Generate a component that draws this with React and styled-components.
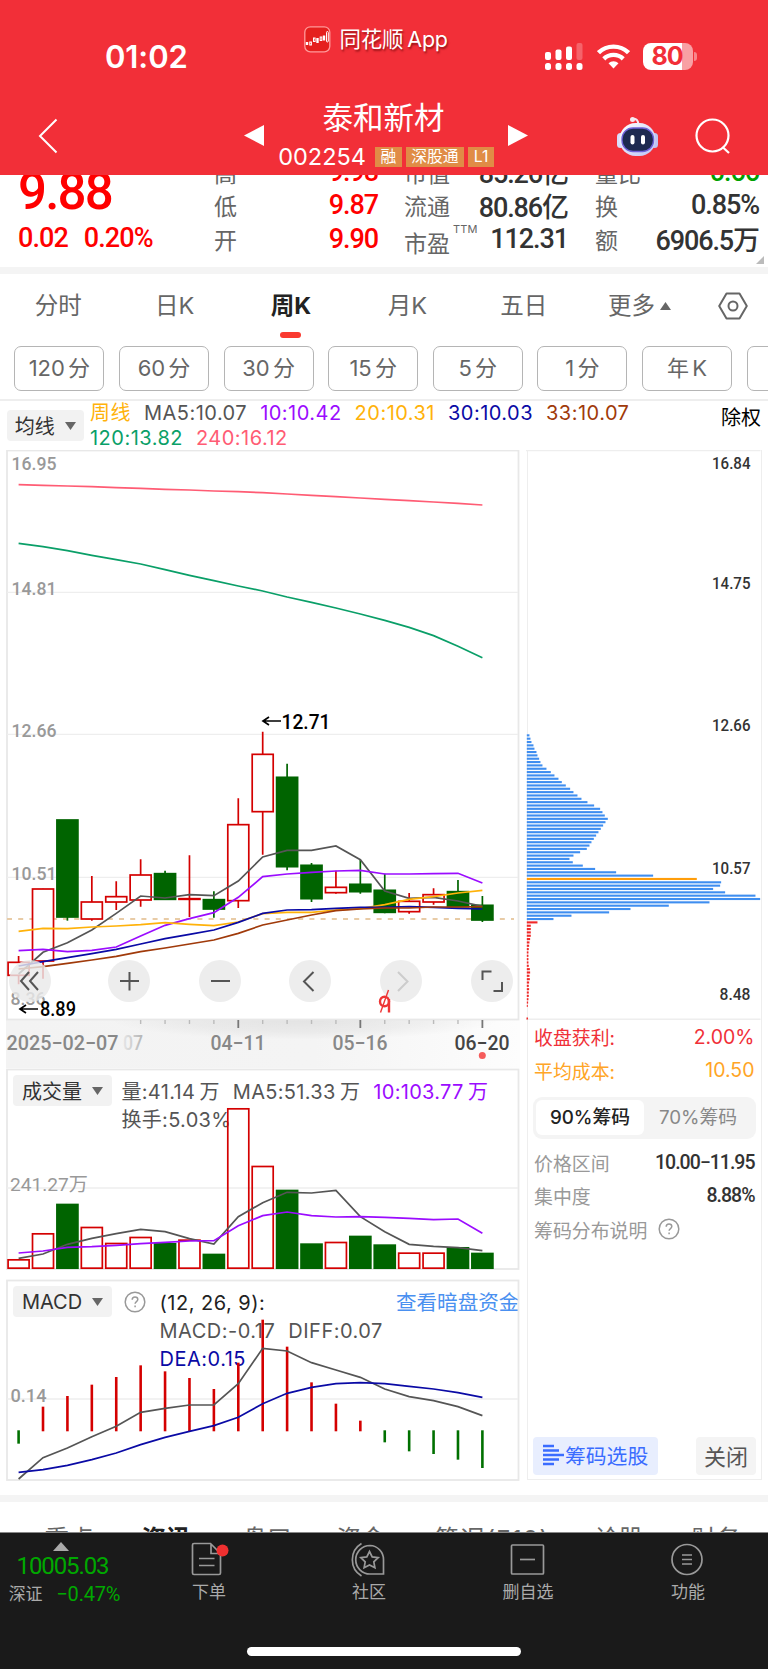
import React from "react";
import styled, { createGlobalStyle, css } from "styled-components";

const CJK = `"Noto Sans CJK SC", sans-serif`;
const TEXT = `Inter, ${CJK}`;
const DIN = `Roboto, ${CJK}`;

const UP = "#d40000";
const DOWN = "#006400";

const GlobalStyle = createGlobalStyle`
    * { box-sizing: border-box; }
    body { margin: 0; background: #fff; overflow: hidden; }
    svg { display: block; flex: none; }
    svg text { font-family: ${DIN}; }
`;

const Page = styled.div`
    width: 768px;
    height: 1669px;
    overflow: hidden;
    background: #fff;
    color: #333;
    font-family: ${TEXT};
    white-space: nowrap;
`;

/* ---------- header ---------- */

const Header = styled.header`
    height: 175px;
    background: #f22f38;
    color: #fff;
`;

const StatusBar = styled.div`
    height: 96px;
    display: grid;
    grid-template-columns: 304px 241px 1fr;
`;

const Clock = styled.div`
    padding: 38px 0 0 105px;
    font-size: 31px;
    line-height: 38px;
    font-weight: 600;
    letter-spacing: -0.1px;
`;

const Brand = styled.div`
    display: flex;
    align-items: center;
    gap: 8.5px;
    height: 26px;
    margin-top: 26px;
    font-size: 21.5px;
    line-height: 22px;
    letter-spacing: -0.2px;
    word-spacing: -2px;
    text-shadow: 1px 2px 2px rgba(90, 0, 0, 0.6);
    span { padding-bottom: 1px; }
`;

const StatusIcons = styled.div`
    display: flex;
    align-items: center;
    height: 28px;
    margin-top: 42px;
    gap: 13.5px;
`;

const Battery = styled.div`
    display: flex;
    align-items: center;
    gap: 1px;
    b {
        width: 50px;
        height: 27px;
        border-radius: 8px;
        background: linear-gradient(90deg, #fff 39px, #f8a0a4 39px);
        color: #f22f38;
        font-size: 25px;
        line-height: 27px;
        font-weight: 700;
        letter-spacing: -1px;
        padding-left: 8.5px;
    }
    i {
        width: 3px;
        height: 9px;
        border-radius: 0 4px 4px 0;
        background: #f8858a;
    }
`;

const TitleBar = styled.div`
    height: 79px;
    display: grid;
    grid-template-columns: 244px 20px 244px 20px 1fr;
    > svg { margin-top: 29px; }
`;

const BackCell = styled.div`
    padding: 22px 0 0 38px;
`;

const StockTitle = styled.div`
    display: flex;
    flex-direction: column;
    align-items: center;
    h1 {
        margin: 1px 0 0 -5px;
        font-size: 30.5px;
        line-height: 42px;
        font-weight: 400;
    }
`;

const CodeRow = styled.div`
    display: flex;
    align-items: center;
    gap: 4px;
    height: 32px;
    margin-top: 2px;
    font-size: 23.5px;
    span { margin: 0 5px 0 0; line-height: 26px; }
`;

const Badge = styled.em`
    height: 20px;
    padding: 0 5.5px;
    background: #e08c46;
    font: 400 15.8px/20px ${TEXT};
`;

const HeaderActions = styled.div`
    display: flex;
    align-items: flex-start;
    padding: 20px 0 0 88px;
    gap: 35.5px;
`;

/* ---------- quote ---------- */

const Quote = styled.section`
    height: 92px;
    overflow: hidden;
    display: grid;
    grid-template-columns: 214px 164px 26px 164px 27px 164px;
    position: relative;
`;

const LastPrice = styled.div`
    margin-top: -28px;
    padding-left: 18px;
    color: #f00;
    font-family: ${DIN};
    font-weight: 500;
    div { font-size: 51px; line-height: 60px; height: 76px; letter-spacing: -1.8px; padding-top: 15px; }
    p { margin: 0; font-size: 27px; line-height: 30px; letter-spacing: -0.9px; word-spacing: 10px; }
`;

const QuoteCol = styled.dl`
    margin: -20px 0 0;
    grid-column: ${props => props.$col};
`;

const QuoteRow = styled.div`
    height: 33.5px;
    display: flex;
    justify-content: space-between;
    align-items: center;
    dt { font-size: 23px; color: #666; position: relative; top: ${props => (props.$sup ? 3 : 0)}px; }
    dt sup { font-size: 11px; position: absolute; left: 49px; top: -2px; line-height: 12px; letter-spacing: .2px; }
    dd {
        margin: 0;
        font-family: ${DIN};
        font-size: 27px;
        font-weight: 500;
        letter-spacing: -1.1px;
        color: ${props => props.$color || "#333"};
    }
`;

const Corner = styled.i`
    position: absolute;
    right: 4px;
    bottom: 3px;
    border: 4.5px solid;
    border-color: transparent #bbb #bbb transparent;
`;

const Divider = styled.div`
    height: 7px;
    background: #f4f4f4;
`;

/* ---------- periods ---------- */

const PeriodTabs = styled.nav`
    display: flex;
    align-items: center;
    height: 63px;
    font-size: 23.5px;
    color: #666;
`;

const PeriodTab = styled.div`
    width: 116.4px;
    height: 63px;
    line-height: 63px;
    text-align: center;
    ${props => props.$active && css`
        font-weight: 700;
        color: #222;
        &::after {
            content: "";
            display: block;
            width: 21px;
            height: 6px;
            margin: -5px auto 0;
            border-radius: 3px;
            background: #fa3a30;
        }
    `}
`;

const More = styled.div`
    display: flex;
    align-items: center;
    gap: 5px;
    padding-left: 26px;
    width: 136px;
    line-height: 62px;
    height: 63px;
`;

const Chips = styled.div`
    display: flex;
    gap: 14.6px;
    padding: 9px 0 9px 14.4px;
    height: 64px;
    border-bottom: 2px solid #eee;
    overflow: hidden;
`;

const Chip = styled.div`
    flex: none;
    width: 90px;
    height: 45px;
    border: 1.5px solid #b5b5b5;
    border-radius: 7px;
    font-size: 22px;
    line-height: 43px;
    text-align: center;
    word-spacing: -3px;
    color: #666;
`;

/* ---------- averages legend ---------- */

const Legend = styled.div`
    height: 49px;
    display: flex;
    padding: 0 7px 0 6.5px;
`;

const Dropdown = styled.div`
    flex: none;
    display: flex;
    align-items: center;
    justify-content: center;
    gap: 10px;
    width: ${props => props.$w}px;
    height: 31px;
    margin-top: ${props => props.$mt || 0}px;
    border-radius: 4px;
    background: #f2f2f2;
    font-size: 20px;
    color: #333;
`;

const LegendText = styled.div`
    flex: 1;
    margin-left: 6px;
    font-size: 20px;
    line-height: 24.5px;
    letter-spacing: 0.48px;
`;

const Tint = styled.span`
    color: ${props => props.$c};
    margin-right: 13px;
`;

const ExRight = styled.div`
    color: #000;
    font-size: 20px;
    line-height: 35px;
`;

/* ---------- charts ---------- */

const Charts = styled.div`
    display: grid;
    grid-template-columns: 514px 235px;
    column-gap: 6.5px;
    padding-left: 6px;
    height: 1045px;
`;

const Stack = styled.div`
    display: grid;
    height: ${props => props.$h}px;
    margin-top: ${props => props.$mt || 0}px;
    > * { grid-area: 1 / 1; }
`;

const ChartButtons = styled.div`
    align-self: end;
    display: flex;
    gap: 48.6px;
    margin: 0 0 67px 2.7px;
`;

const RoundButton = styled.div`
    width: 42px;
    height: 42px;
    border-radius: 50%;
    background: rgba(233, 233, 233, 0.82);
    &:first-child { margin-right: 9px; }
`;

const SubHead = styled.div`
    display: grid;
    grid-template-columns: 99px 1fr;
    column-gap: 9.5px;
    align-content: start;
    padding: 7px 0 0 7px;
`;

const SubLines = styled.div`
    font-size: 20px;
    line-height: 28px;
    letter-spacing: ${props => props.$ls || 0.3}px;
    word-spacing: ${props => props.$ws || 0}px;
    color: #555;
    margin-top: 3px;
`;

const MacdHead = styled.div`
    display: grid;
    grid-template-columns: 99px 47.5px 1fr auto;
    align-content: start;
    padding: 7px 2px 0 7px;
`;

const HelpCell = styled.div`
    padding: 5px 0 0 12px;
`;

const LinkText = styled.div`
    font-size: 20.6px;
    line-height: 33px;
    color: #4a90f0;
`;

/* ---------- chip panel ---------- */

const ChipPanel = styled.aside`
    height: 1030px;
    border: 1.5px solid #eee;
    border-top: 0;
    display: flex;
    flex-direction: column;
    > svg { margin-left: -1.5px; }
`;

const InfoRow = styled.div`
    display: flex;
    justify-content: space-between;
    align-items: center;
    height: 33.4px;
    padding: 0 6px 0 6.5px;
    font-size: 18.9px;
    color: ${props => props.$c || "#999"};
    b {
        font-family: ${DIN};
        font-size: 19.5px;
        font-weight: 500;
        letter-spacing: -1px;
        color: #333;
    }
    span { font-size: 19.5px; }
`;

const Segment = styled.div`
    display: flex;
    height: 42px;
    margin: 10px 5px 7px 5px;
    padding: 3.5px;
    border-radius: 9px;
    background: #f4f4f4;
    font-size: 18.8px;
    line-height: 35px;
    text-align: center;
`;

const SegmentItem = styled.div`
    flex: 1;
    border-radius: 6px;
    color: ${props => (props.$on ? "#222" : "#888")};
    background: ${props => (props.$on ? "#fff" : "none")};
    font-weight: ${props => (props.$on ? 500 : 400)};
`;

const Help = styled.div`
    display: flex;
    align-items: center;
    gap: 11px;
`;

const PanelFoot = styled.div`
    display: flex;
    justify-content: space-between;
    margin-top: auto;
    padding: 0 5px 4px 5.5px;
`;

const FootButton = styled.div`
    display: flex;
    align-items: center;
    height: 38px;
    padding: 0 ${props => props.$px}px 2px;
    border-radius: 4px;
    font-size: ${props => props.$size}px;
    background: ${props => props.$bg};
    color: ${props => props.$c};
`;

const NewsTabs = styled.div`
    height: 30.5px;
    overflow: hidden;
    display: flex;
    padding: 18.5px 0 0 44.5px;
    font-size: 24.5px;
    color: #666;
    border-bottom: 1px solid #888;
`;

const NewsTab = styled.div`
    flex: none;
    width: ${props => props.$w}px;
    line-height: 36px;
    letter-spacing: ${props => (props.$w > 150 ? 1.2 : 0)}px;
    font-weight: ${props => (props.$active ? 700 : 400)};
    color: ${props => (props.$active ? "#222" : "#666")};
`;

/* ---------- footer ---------- */

const Footer = styled.footer`
    height: 137px;
    background: #1a1a1a;
    color: #aaa;
    display: flex;
    flex-direction: column;
    justify-content: space-between;
`;

const FooterRow = styled.div`
    display: grid;
    grid-template-columns: 129px 160px 160px 158px 162px;
`;

const IndexBox = styled.div`
    display: flex;
    flex-direction: column;
    align-items: center;
    color: #00a800;
    font-family: ${DIN};
    padding: 9px 7px 0 0;
    div { font-size: 24px; line-height: 28px; letter-spacing: -1.1px; margin: 1px 0 0 3px; }
    p { margin: 1px 0 0 7px; display: flex; gap: 14px; font-size: 20px; line-height: 26px; letter-spacing: -0.2px; }
    small { font-size: 17px; color: #aaa; }
`;

const FooterItem = styled.div`
    display: flex;
    flex-direction: column;
    align-items: center;
    padding-top: 9px;
    font-size: 17px;
    line-height: 20px;
    gap: 5px;
`;

const HomeBar = styled.div`
    width: 274px;
    height: 9px;
    margin: 0 0 14px 247px;
    border-radius: 5px;
    background: #fff;
`;

/* ---------- data (y values are in thirds of a pixel) ---------- */

const STEP = 24.41;
const cx = i => 18.6 + i * STEP;

// [up, high, open/close top, open/close bottom, low]
const candles = [
    [1, 768, 787, 826, 853], [1, 566, 567, 783, 836], [0, 360, 360, 651, 662], [1, 528, 606, 657, 662],
    [1, 544, 590, 606, 630], [1, 478, 525, 600, 620], [0, 512, 521, 598, 600], [1, 466, 596, 598, 651],
    [0, 574, 599, 627, 653], [1, 295, 374, 602, 624], [1, 95, 163, 335, 464], [0, 191, 232, 500, 511],
    [0, 489, 496, 596, 606], [1, 512, 562, 578, 581], [0, 479, 553, 575, 581], [0, 521, 571, 637, 640],
    [1, 579, 604, 635, 641], [1, 565, 584, 606, 614], [0, 540, 575, 620, 621], [0, 588, 616, 660, 666],
];

const averages = [
    ["#555", [822, 757, 728, 690, 640, 588, 594, 584, 587, 543, 471, 451, 451, 438, 479, 573, 595, 592, 603, 619]],
    ["#9b0cff", [752, 748, 755, 751, 741, 708, 676, 656, 638, 592, 530, 522, 517, 513, 511, 522, 522, 521, 520, 549]],
    ["#ffb20a", [694, 685, 686, 681, 678, 674, 668, 673, 677, 666, 641, 637, 637, 630, 626, 614, 598, 590, 579, 571]],
    ["#0a0aa5", [798, 785, 773, 761, 748, 732, 716, 703, 690, 667, 640, 630, 629, 625, 622, 622, 620, 622, 625, 627]],
    ["#a03a0a", [807, 800, 790, 780, 769, 755, 744, 732, 720, 700, 675, 660, 645, 632, 627, 624, 624, 621, 621, 620]],
    ["#0a9f68", [-470, -460, -448, -434, -421, -408, -391, -374, -358, -342, -327, -309, -293, -276, -258, -239, -218, -193, -161, -127]],
    ["#ff5c74", [-646, -644, -642, -640, -637, -635, -632, -630, -627, -625, -622, -618, -614, -610, -606, -602, -598, -594, -590, -585]],
];

const volumes = [
    [1, 598], [1, 520], [0, 432], [1, 501], [1, 549], [1, 531], [0, 550], [1, 539], [0, 582], [1, 145],
    [1, 318], [0, 390], [0, 551], [1, 546], [0, 528], [0, 554], [1, 578], [1, 578], [0, 562], [0, 579],
];
const volMa5 = [595, 582, 553, 535, 521, 508, 515, 536, 552, 470, 428, 397, 399, 391, 470, 515, 553, 559, 563, 572];
const volMa10 = [579, 573, 562, 560, 556, 551, 547, 543, 542, 497, 467, 456, 467, 471, 470, 472, 475, 479, 477, 520];

const macd = [521, 410, 378, 344, 321, 286, 304, 324, 357, 278, 149, 230, 337, 401, 452, 517, 544, 552, 569, 594];
const diff = [627, 563, 534, 500, 469, 427, 415, 405, 405, 341, 235, 243, 278, 300, 322, 357, 380, 392, 410, 437];
const dea = [607, 599, 586, 569, 549, 524, 502, 484, 467, 442, 401, 370, 352, 341, 338, 341, 349, 357, 368, 382];

const chipBars = [
    60, 63, 66, 72, 75, 81, 84, 89, 93, 99, 111, 124, 135, 147, 157, 169, 182, 192, 204, 216,
    234, 254, 272, 279, 286, 295, 288, 281, 274, 267, 260, 253, 246, 240, 232, 212, 192, 180, 190, 220,
    257, 320, 431, 562, 635, 632, 611, 647, 738, 752, 600, 478, 363, 299, 186, 132, 84,
    64, 64, 64, 64, 62, 60, 59, 58, 57, 57, 57, 57, 58, 61, 62, 60, 61, 59, 58, 59, 58, 58, 57, 56, 55,
];
const chipColor = i => (i === 43 ? "#ff9d0a" : i > 55 ? "#f02828" : "#3f8ef0");

const Line = ({ data, color, base }) => (
    <polyline
        points={data.map((v, i) => `${cx(i)},${base + v / 3}`).join(" ")}
        fill="none" stroke={color} strokeWidth="1.7"
    />
);

const Label = ({ x, y, w, size = 19, color = "#999", weight = 500, children }) => (
    <text x={x} y={y} fontSize={size} fill={color} fontWeight={weight}
        textLength={w} lengthAdjust="spacingAndGlyphs">{children}</text>
);

const Arrow = ({ x, y }) => (
    <path d={`M${x + 19} ${y}H${x + 1}M${x + 7} ${y - 4}L${x + 1} ${y}L${x + 7} ${y + 4}`}
        fill="none" stroke="#000" strokeWidth="1.7" />
);

const Triangle = ({ up, color = "#666", w = 11, h = 8 }) => (
    <svg width={w} height={h}>
        <path d={up ? `M0 ${h}L${w / 2} 0L${w} ${h}z` : `M0 0H${w}L${w / 2} ${h}z`} fill={color} />
    </svg>
);

const HelpIcon = () => (
    <svg width="22" height="22" viewBox="0 0 22 22" fill="none" stroke="#999" strokeWidth="1.5">
        <circle cx="11" cy="11" r="9.8" />
        <path d="M8.2 8.8c0-1.7 1.2-2.8 2.8-2.8s2.8 1 2.8 2.5c0 2-2.7 2.2-2.7 4.3M11.1 14.4v1.8" />
    </svg>
);

const PriceChart = () => (
    <svg width="514" height="619" viewBox="6 450 514 619">
        <defs>
            <linearGradient id="axis" x1="0" x2="1">
                <stop offset="0" stopColor="#f3f3f3" />
                <stop offset=".6" stopColor="#f4f4f4" />
                <stop offset="1" stopColor="#fdfdfd" />
            </linearGradient>
            <radialGradient id="shade" cx=".5" cy="0" r=".5" gradientTransform="scale(1 1.8)">
                <stop offset="0" stopColor="#000" stopOpacity=".07" />
                <stop offset=".6" stopColor="#000" stopOpacity=".04" />
                <stop offset="1" stopColor="#000" stopOpacity="0" />
            </radialGradient>
            <linearGradient id="fade" x1="0" x2="1">
                <stop offset="0" stopColor="#e6e6e6" />
                <stop offset="1" stopColor="#b4b4b4" />
            </linearGradient>
        </defs>
        <rect x="6" y="1019" width="514" height="49" fill="url(#axis)" />
        <rect x="110" y="1020" width="390" height="22" fill="url(#shade)" />
        <rect x="7" y="450.5" width="511.5" height="569" fill="none" stroke="#e8e8e8" strokeWidth="1.8" />
        {[592.3, 734.3, 877.3].map(y => <path key={y} d={`M7 ${y}H518`} stroke="#eee" strokeWidth="1.3" />)}
        <path d="M7 919H514" stroke="#e8cba6" strokeWidth="1.8" strokeDasharray="5 6.2" />
        <Label x={11.5} y={470} w={45}>16.95</Label>
        <Label x={11.5} y={595} w={45}>14.81</Label>
        <Label x={11.5} y={737} w={45}>12.66</Label>
        <Label x={11.5} y={879.5} w={45}>10.51</Label>
        <Label x={10.5} y={1004.5} w={35}>8.36</Label>
        {candles.map(([up, high, top, bottom, low], i) => {
            const y = v => 700 + v / 3;
            const color = up ? UP : DOWN;
            return (
                <g key={i} stroke={color} strokeWidth="1.7">
                    <path d={`M${cx(i)} ${y(high)}V${y(top)}M${cx(i)} ${y(bottom)}V${y(low)}`} />
                    <rect x={cx(i) - 10.5} y={y(top)} width="21" height={y(bottom) - y(top)}
                        fill={up ? "#fff" : color} />
                </g>
            );
        })}
        {averages.map(([color, data]) => <Line key={color} data={data} color={color} base={700} />)}
        <Arrow x={262} y={721} />
        <Label x={281.5} y={728.5} w={49} size={20} color="#000">12.71</Label>
        {candles.slice(5).map((_, k) => {
            const i = k + 5;
            const major = i % 5 === 4;
            return <path key={i} d={`M${cx(i)} 1020V${major ? 1028 : 1024}`}
                stroke={major ? "#777" : "#bbb"} strokeWidth={major ? 1.8 : 1.4} />;
        })}
        <Label x={6.5} y={1050} w={112} size={20} color="#888">2025−02−07</Label>
        <Label x={123} y={1050} w={20} size={20} color="url(#fade)">07</Label>
        <Label x={210.5} y={1050} w={55} size={20} color="#888">04−11</Label>
        <Label x={332.5} y={1050} w={55} size={20} color="#888">05−16</Label>
        <Label x={454.5} y={1050} w={55} size={20} color="#444">06−20</Label>
        <circle cx="482.3" cy="1055.5" r="3.5" fill="#f55c5c" />
    </svg>
);

// marks that stay above the floating buttons
const PriceMarks = () => (
    <svg width="514" height="619" viewBox="6 450 514 619">
        <Arrow x={19} y={1009} />
        <Label x={40} y={1016} w={36} size={20} color="#000">8.89</Label>
        <g fill="none" stroke="#ee3535" strokeWidth="2.4">
            <ellipse cx="384.5" cy="1001.5" rx="4.5" ry="4.8" />
            <path d="M389 999V1012.500" />
            <path d="M388.500 990L380.500 1012.500" strokeWidth="1.400" />
        </g>
    </svg>
);

const buttonIcons = [
    "M20 12L12 21L20 30M29 12L21 21L29 30",
    "M12 21H31M21.500 12V30.500",
    "M12 21H31",
    "M24.500 12L15 21.500L24.500 31",
    "M18 12L27.500 21.500L18 31",
    "M11.500 20V11.500H20.500M31 22V31H22.500",
];

const VolumeChart = () => (
    <svg width="514" height="202" viewBox="6 1068 514 202">
        <rect x="7" y="1069.500" width="511.500" height="199.500" fill="none" stroke="#e8e8e8" strokeWidth="1.8" />
        <path d="M7 1188H518" stroke="#eee" strokeWidth="1.3" />
        <Label x={10} y={1191} w={78} weight={400}>241.27万</Label>
        {volumes.map(([up, top], i) => (
            <rect key={i} x={cx(i) - 10.5} y={1060 + top / 3 + .5} width="21" height={(623 - top) / 3}
                fill={up ? "none" : DOWN} stroke={up ? UP : DOWN} strokeWidth="1.7" />
        ))}
        <Line data={volMa5} color="#555" base={1060} />
        <Line data={volMa10} color="#9b0cff" base={1060} />
    </svg>
);

const MacdChart = () => (
    <svg width="514" height="202" viewBox="6 1279 514 202">
        <rect x="7" y="1280.500" width="511.500" height="199.500" fill="none" stroke="#e8e8e8" strokeWidth="1.8" />
        <path d="M7 1399H518" stroke="#eee" strokeWidth="1.3" />
        <Label x={10.5} y={1402} w={36}>0.14</Label>
        {macd.map((v, i) => (
            <path key={i} d={`M${cx(i)} ${v < 483 ? 1431.3 : 1430.3}V${1270 + v / 3}`}
                stroke={v < 483 ? UP : "#007000"} strokeWidth="2.6" />
        ))}
        <Line data={diff} color="#555" base={1270} />
        <Line data={dea} color="#0a0aa5" base={1270} />
    </svg>
);

const ChipChart = () => (
    <svg width="235" height="570" viewBox="526.500 450 235 570">
        <path d="M526.500 450.500H761M526.500 1019.200H761" stroke="#eee" strokeWidth="1.5" />
        {chipBars.map((u, i) => (
            <rect key={i} x="527.300" y={734.3 + i * 3.34} width={(u - 52) / 3} height="2.100" fill={chipColor(i)} />
        ))}
        <rect x="527" y="1017.500" width="1.500" height="2" fill="#f02828" />
        <Label x={712.5} y={469.3} w={38.5} size={17} color="#333">16.84</Label>
        <Label x={712.5} y={588.7} w={38.5} size={17} color="#333">14.75</Label>
        <Label x={712.5} y={731.3} w={38.5} size={17} color="#333">12.66</Label>
        <Label x={712.5} y={873.7} w={38.5} size={17} color="#333">10.57</Label>
        <Label x={720} y={1000} w={31} size={17} color="#333">8.48</Label>
    </svg>
);

const Logo = () => (
    <svg width="27" height="27" viewBox="0 0 27 27">
        <rect x=".8" y=".8" width="25" height="25" rx="5.500" fill="#e5201e" stroke="#ff9a9a" strokeWidth="1.3" />
        <g stroke="#fff" strokeWidth="1" fill="none">
            <path d="M3 16v3M13.500 12v5M20 9.500v5" strokeWidth="2.400" />
            <rect x="5.800" y="16" width="1.600" height="3" />
            <rect x="9.500" y="12" width="1.600" height="3.500" />
            <rect x="16.200" y="11" width="1.600" height="3.500" />
            <rect x="22.500" y="5.500" width="1.800" height="10.500" rx=".9" />
        </g>
    </svg>
);

const Robot = () => (
    <svg width="43" height="41" viewBox="0 0 43 41">
        <defs>
            <linearGradient id="shell" x1="0" x2="1" y1="0" y2="1">
                <stop offset="0" stopColor="#fff" /><stop offset="1" stopColor="#bcc3f5" />
            </linearGradient>
        </defs>
        <path d="M22 9C23 5 20 2 17 3" fill="none" stroke="#f3e6f2" strokeWidth="2.200" />
        <circle cx="16.500" cy="3.500" r="2.500" fill="#f6e9ef" />
        <rect x="1" y="17" width="7" height="15" rx="3.500" fill="#d9dcfb" />
        <rect x="35" y="17" width="7" height="15" rx="3.500" fill="#bfc5f3" />
        <rect x="3.500" y="7" width="36" height="33" rx="16" fill="url(#shell)" />
        <rect x="6" y="12" width="31.500" height="23.500" rx="11" fill="#1e2a50" stroke="#6f62d8" strokeWidth="1.300" />
        <rect x="14.500" y="19" width="4" height="9.500" rx="2" fill="#fff" />
        <rect x="25" y="19" width="4" height="9.500" rx="2" fill="#fff" />
    </svg>
);

const SignalIcon = () => (
    <svg width="38" height="27" viewBox="0 0 38 27" fill="#fff">
        <rect x="0" y="9" width="6" height="8" rx="2" />
        <rect x="10.500" y="6.500" width="6" height="10.500" rx="2" />
        <rect x="21" y="3.500" width="6" height="13.500" rx="2" />
        <rect x="31.500" y="0" width="6" height="17" rx="2" opacity=".25" />
        {[0, 10.5, 21, 31.5].map(x => <rect key={x} x={x} y="20" width="6" height="7" rx="2.500" />)}
    </svg>
);

const WifiIcon = () => (
    <svg width="33" height="25" viewBox="0 0 33 25" fill="none" stroke="#fff">
        <path d="M1.500 8.700a21.500 21.500 0 0 1 30 0" strokeWidth="4.400" />
        <path d="M6.800 14.800a13.900 13.900 0 0 1 19.400 0" strokeWidth="4.400" />
        <path d="M16.500 24.500l-5-5.300a7.300 7.300 0 0 1 10 0z" fill="#fff" stroke="none" />
    </svg>
);

const footerItems = [
    ["下单", (
        <g>
            <path d="M21.500 1.500H5a1.500 1.500 0 0 0-1.500 1.500v28A1.500 1.500 0 0 0 5 32.500h25a1.500 1.500 0 0 0 1.500-1.500V11.500zM22 2v9.500H31" />
            <path d="M10 16.500H25.500M10 23.500H25.500" />
            <circle cx="33.500" cy="8.500" r="6" fill="#f03030" stroke="none" />
        </g>
    )],
    ["社区", (
        <g>
            <path d="M21 3.500a14 14 0 1 0 0 28.500H34.500V17.500A14 14 0 0 0 21 3.500z" />
            <path d="M12.500 1.500a19 19 0 0 0 0 32.500" />
            <path d="M20.500 9.500l2.700 5.400 6 .8-4.400 4.200 1.100 5.900-5.400-2.800-5.400 2.800 1.100-5.900-4.400-4.200 6-.8z" />
        </g>
    )],
    ["删自选", (
        <g>
            <rect x="3.5" y="3" width="32" height="29" rx="1" />
            <path d="M12 17.500H27" />
        </g>
    )],
    ["功能", (
        <g>
            <circle cx="19" cy="17.500" r="15" />
            <path d="M14 13H24M14 17.500H24M14 22H24" />
        </g>
    )],
];

const quoteCols = [
    [2, "#f00", [["高", "9.98"], ["低", "9.87"], ["开", "9.90"]]],
    [4, "#333", [["市值", "85.26亿"], ["流通", "80.86亿"], ["市盈", "112.31", true]]],
    [6, "#333", [["量比", "0.66"], ["换", "0.85%"], ["额", "6906.5万"]]],
];

const newsTabs = [
    ["重点", 97], ["资讯", 101], ["盘口", 94], ["资金", 98], ["简况(F10)", 160], ["诊股", 97], ["财务", 60],
];

const App = () => (
    <Page>
        <GlobalStyle />
        <Header>
            <StatusBar>
                <Clock>01:02</Clock>
                <Brand><Logo /><span>同花顺 App</span></Brand>
                <StatusIcons>
                    <SignalIcon />
                    <WifiIcon />
                    <Battery><b>80</b><i /></Battery>
                </StatusIcons>
            </StatusBar>
            <TitleBar>
                <BackCell>
                    <svg width="20" height="36"><path d="M18.500 1.500L2 18L18.500 34.500" fill="none" stroke="#fff" strokeWidth="2" /></svg>
                </BackCell>
                <svg width="20" height="21"><path d="M0 10.500L20 0V21z" fill="#fff" /></svg>
                <StockTitle>
                    <h1>泰和新材</h1>
                    <CodeRow>
                        <span>002254</span>
                        <Badge>融</Badge>
                        <Badge>深股通</Badge>
                        <Badge>L1</Badge>
                    </CodeRow>
                </StockTitle>
                <svg width="20" height="21"><path d="M20 10.500L0 0V21z" fill="#fff" /></svg>
                <HeaderActions>
                    <Robot />
                    <svg width="37" height="38" fill="none" stroke="#fff" strokeWidth="2.200">
                        <circle cx="17.500" cy="19.500" r="16" /><path d="M27.500 31L34 37" />
                    </svg>
                </HeaderActions>
            </TitleBar>
        </Header>

        <Quote>
            <LastPrice>
                <div>9.88</div>
                <p>0.02 0.20%</p>
            </LastPrice>
            {quoteCols.map(([col, color, rows]) => (
                <QuoteCol key={col} $col={col}>
                    {rows.map(([name, value, ttm]) => (
                        <QuoteRow key={name} $color={name === "量比" ? "#00a000" : color} $sup={ttm}>
                            <dt>{name}{ttm && <sup>TTM</sup>}</dt>
                            <dd>{value}</dd>
                        </QuoteRow>
                    ))}
                </QuoteCol>
            ))}
            <Corner />
        </Quote>
        <Divider />

        <PeriodTabs>
            {["分时", "日K", "周K", "月K", "五日"].map(name => (
                <PeriodTab key={name} $active={name === "周K"}>{name}</PeriodTab>
            ))}
            <More>更多<Triangle up /></More>
            <svg width="30" height="28" viewBox="0 0 30 28" fill="none" stroke="#666" strokeWidth="2">
                <path d="M8.500 1.500H21.500L28.800 14L21.500 26.500H8.500L1.200 14z" strokeLinejoin="round" />
                <circle cx="15" cy="14" r="4.500" />
            </svg>
        </PeriodTabs>
        <Chips>
            {["120 分", "60 分", "30 分", "15 分", "5 分", "1 分", "年 K", ""].map((name, i) => <Chip key={i}>{name}</Chip>)}
        </Chips>

        <Legend>
            <Dropdown $w={77.5} $mt={9}>均线<Triangle /></Dropdown>
            <LegendText>
                <Tint $c="#ffb20a">周线</Tint><Tint $c="#555">MA5:10.07</Tint><Tint $c="#9b0cff">10:10.42</Tint>
                <Tint $c="#ffb20a">20:10.31</Tint><Tint $c="#0a0aa5">30:10.03</Tint><Tint $c="#a03a0a">33:10.07</Tint>
                <br />
                <Tint $c="#0a9f68">120:13.82</Tint><Tint $c="#ff5c74">240:16.12</Tint>
            </LegendText>
            <ExRight>除权</ExRight>
        </Legend>

        <Charts>
            <div>
                <Stack $h={619}>
                    <PriceChart />
                    <ChartButtons>
                        {buttonIcons.map((d, i) => (
                            <RoundButton key={d}>
                                <svg width="42" height="42"><path d={d} fill="none" stroke={i === 4 ? "#ccc" : "#555"} strokeWidth="2" /></svg>
                            </RoundButton>
                        ))}
                    </ChartButtons>
                    <PriceMarks />
                </Stack>
                <Stack $h={202} $mt={-1}>
                    <SubHead>
                        <Dropdown $w={99}>成交量<Triangle /></Dropdown>
                        <SubLines $ws={-1.5}>
                            <Tint>量:41.14 万</Tint><Tint>MA5:51.33 万</Tint><Tint $c="#9b0cff">10:103.77 万</Tint>
                            <br />换手:5.03%
                        </SubLines>
                    </SubHead>
                    <VolumeChart />
                </Stack>
                <Stack $h={202} $mt={9}>
                    <MacdHead>
                        <Dropdown $w={99}>MACD<Triangle /></Dropdown>
                        <HelpCell><HelpIcon /></HelpCell>
                        <SubLines $ls={0.5}>
                            <Tint $c="#222">(12, 26, 9):</Tint><br />
                            <Tint>MACD:-0.17</Tint><Tint>DIFF:0.07</Tint><br />
                            <Tint $c="#0a0aa5">DEA:0.15</Tint>
                        </SubLines>
                        <LinkText>查看暗盘资金</LinkText>
                    </MacdHead>
                    <MacdChart />
                </Stack>
            </div>
            <ChipPanel>
                <ChipChart />
                <InfoRow $c="#f03038">收盘获利:<span>2.00%</span></InfoRow>
                <InfoRow $c="#ffa526">平均成本:<span>10.50</span></InfoRow>
                <Segment>
                    <SegmentItem $on>90%筹码</SegmentItem>
                    <SegmentItem>70%筹码</SegmentItem>
                </Segment>
                <InfoRow>价格区间<b>10.00−11.95</b></InfoRow>
                <InfoRow>集中度<b>8.88%</b></InfoRow>
                <InfoRow><Help>筹码分布说明<HelpIcon /></Help></InfoRow>
                <PanelFoot>
                    <FootButton $px={10} $size={20.8} $bg="#e8eefe" $c="#3a6cff">
                        <svg width="22" height="22" stroke="#3a6cff" strokeWidth="2.600">
                            <path d="M0 2H11M0 6.500H16M0 11H21M0 15.500H16M0 20H11" />
                        </svg>
                        筹码选股
                    </FootButton>
                    <FootButton $px={7.5} $size={22} $bg="#f4f4f4" $c="#555">关闭</FootButton>
                </PanelFoot>
            </ChipPanel>
        </Charts>
        <Divider />
        <NewsTabs>
            {newsTabs.map(([name, w]) => <NewsTab key={name} $w={w} $active={name === "资讯"}>{name}</NewsTab>)}
        </NewsTabs>

        <Footer>
            <FooterRow>
                <IndexBox>
                    <Triangle up w={16} h={9} color="#aaa" />
                    <div>10005.03</div>
                    <p><small>深证</small>−0.47%</p>
                </IndexBox>
                {footerItems.map(([name, icon]) => (
                    <FooterItem key={name}>
                        <svg width="40" height="35" fill="none" stroke="#999" strokeWidth="1.700">{icon}</svg>
                        {name}
                    </FooterItem>
                ))}
            </FooterRow>
            <HomeBar />
        </Footer>
    </Page>
);

export default App;
